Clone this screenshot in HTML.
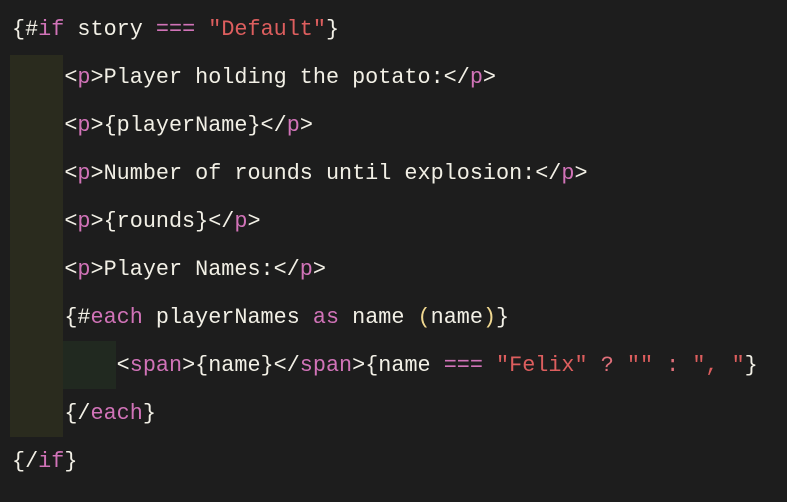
<html><head><style>
body{margin:0;width:787px;height:502px;background:#1d1d1d;overflow:hidden;position:relative}
.b1{position:absolute;left:10px;top:55px;width:53px;height:382px;background:#2a2b1e}
.b2{position:absolute;left:63px;top:341px;width:53px;height:48px;background:#212920}
pre{position:absolute;left:12px;top:6px;margin:0;font-family:"Liberation Mono",monospace;font-size:21.8px;line-height:48px;color:#f2f0e6}
.k{color:#d173b8}.s{color:#dd5e5e}.y{color:#f0d890}.o{color:#e0707a}
</style></head><body>
<div class="b1"></div><div class="b2"></div>
<pre>{#<span class="k">if</span> story <span class="k">===</span> <span class="s">"Default"</span>}
    &lt;<span class="k">p</span>&gt;Player holding the potato:&lt;/<span class="k">p</span>&gt;
    &lt;<span class="k">p</span>&gt;{playerName}&lt;/<span class="k">p</span>&gt;
    &lt;<span class="k">p</span>&gt;Number of rounds until explosion:&lt;/<span class="k">p</span>&gt;
    &lt;<span class="k">p</span>&gt;{rounds}&lt;/<span class="k">p</span>&gt;
    &lt;<span class="k">p</span>&gt;Player Names:&lt;/<span class="k">p</span>&gt;
    {#<span class="k">each</span> playerNames <span class="k">as</span> name <span class="y">(</span>name<span class="y">)</span>}
        &lt;<span class="k">span</span>&gt;{name}&lt;/<span class="k">span</span>&gt;{name <span class="k">===</span> <span class="s">"Felix"</span> <span class="o">?</span> <span class="s">""</span> <span class="o">:</span> <span class="s">", "</span>}
    {/<span class="k">each</span>}
{/<span class="k">if</span>}</pre>
</body></html>
